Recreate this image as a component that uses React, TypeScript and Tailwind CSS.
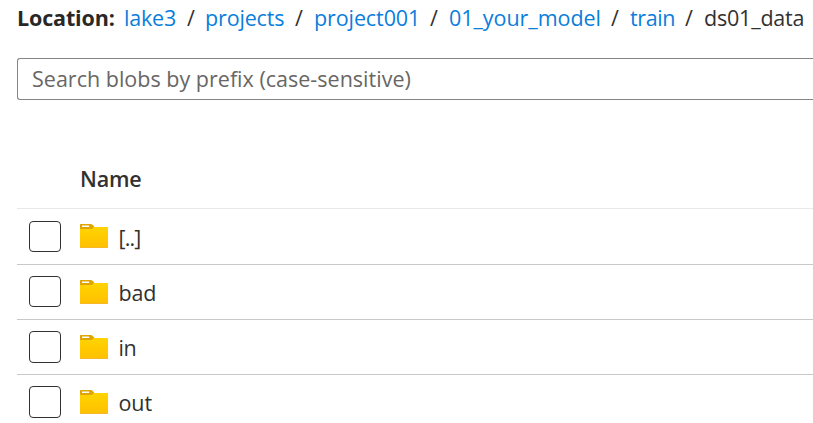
type Crumb = { label: string; text: string; sep?: string };

const crumbs: Crumb[] = [
  { label: 'lake3', text: 'w-[63px] tracking-[-0.2px]', sep: 'w-[18px]' },
  { label: 'projects', text: 'w-[90px] tracking-[-0.15px]', sep: 'w-[19px]' },
  { label: 'project001', text: 'w-[116px] tracking-[-0.1px]', sep: 'w-[19px]' },
  { label: '01_your_model', text: 'w-[162px] tracking-[-0.05px]', sep: 'w-[19px]' },
  { label: 'train', text: 'w-[55px] tracking-[-0.4px]', sep: 'w-[19px]' },
];

const rows = [
  { name: '[..]', height: 'h-14', box: 'h-[31px]', icon: 'pb-0.5', text: 'pt-1 tracking-[-0.9px]' },
  { name: 'bad', height: 'h-[55px]', box: 'mb-px h-[31px]', icon: '', text: 'pt-0.5 tracking-[-0.2px]' },
  { name: 'in', height: 'h-[55px]', box: 'h-8', icon: '', text: 'pt-0.5 tracking-[-0.5px]' },
  { name: 'out', height: 'h-[55px]', box: 'h-8', icon: '', text: 'pt-0.5 tracking-[-0.1px]' },
];

function FolderIcon() {
  return (
    <svg width="28" height="24" viewBox="0 0 28 24" className="block shrink-0">
      <defs>
        <linearGradient id="folder" x1="0" y1="0" x2="0" y2="1">
          <stop offset="0" stopColor="#ffd400" />
          <stop offset="1" stopColor="#ffc000" />
        </linearGradient>
      </defs>
      <path d="M0 3H28V23.5Q28 24 27.5 24H.5Q0 24 0 23.5Z" fill="url(#folder)" />
      <path d="M0 23.2H28V23.5Q28 24 27.5 24H.5Q0 24 0 23.5Z" fill="#f0b63c" />
      <path d="M0 .6Q0 0 .6 0H11Q11.8 0 12.4 .7L14.3 2.6L12.4 4.4Q11.8 5 11 5H0Z" fill="#dfa500" />
      <rect x="2" y="1.6" width="7.2" height="1.5" rx=".3" fill="#fff" />
    </svg>
  );
}

export default function App() {
  return (
    <div className="h-[423px] w-[813px] overflow-hidden bg-white pl-[17px] font-['Open_Sans','Noto_Sans',sans-serif] text-[21.5px] text-[#323130]">
      <nav className="flex h-[35px] items-center whitespace-nowrap leading-[35px]">
        <span className="w-[107px] shrink-0 font-bold tracking-[-0.15px] text-[#292827]">Location:</span>
        {crumbs.map((c) => (
          <span key={c.label} className="flex shrink-0">
            <a className={`${c.text} text-[#0a7edb]`}>{c.label}</a>
            <span className={c.sep}>/</span>
          </span>
        ))}
        <span className="tracking-[-0.2px]">ds01_data</span>
      </nav>
      <div className="mt-[23px] flex h-[42px] items-center rounded-l-[3px] border border-r-0 border-[#868483] pl-3.5 tracking-[0.01px] text-[#686664]">
        Search blobs by prefix (case-sensitive)
      </div>
      <div className="mt-[50px] flex h-[59px] items-center border-b border-[#e8e8e8] pl-[63px] font-semibold tracking-[-0.2px]">
        Name
      </div>
      {rows.map((r) => (
        <div key={r.name} className={`${r.height} flex items-center border-b border-[#c8c8c8] pl-3`}>
          <span className={`${r.box} w-8 shrink-0 rounded-[4px] border border-[#323130]`} />
          <span className={`${r.icon} ml-[19px]`}>
            <FolderIcon />
          </span>
          <span className={`${r.text} ml-[10.5px]`}>{r.name}</span>
        </div>
      ))}
    </div>
  );
}
